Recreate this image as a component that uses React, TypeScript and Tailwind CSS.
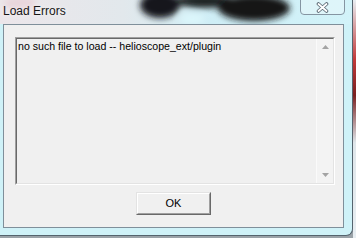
import React from 'react';

/**
 * Diálogo "Load Errors" al estilo Windows 7 (Aero), recortado a 356x238.
 */
function TitleGlass() {
  // fondo borroso detrás del cristal de la barra de título
  return (
    <svg className="absolute inset-0" width="353" height="24" viewBox="0 0 353 24">
      <defs>
        <linearGradient id="base" x1="0" x2="1" y1="0" y2="0">
          <stop offset="0" stopColor="#ece6ea" />
          <stop offset="0.35" stopColor="#e2e8ec" />
          <stop offset="0.6" stopColor="#cfeef6" />
          <stop offset="1" stopColor="#d2f3f9" />
        </linearGradient>
        <filter id="blur" x="-30%" y="-100%" width="160%" height="300%">
          <feGaussianBlur stdDeviation="3" />
        </filter>
      </defs>
      <rect width="353" height="24" fill="url(#base)" />
      <g filter="url(#blur)">
        <ellipse cx="20" cy="4" rx="16" ry="8" fill="#e9d6dc" />
        <ellipse cx="160" cy="5" rx="20" ry="13" fill="#16181b" />
        <ellipse cx="205" cy="1" rx="30" ry="7" fill="#1e2024" />
        <ellipse cx="254" cy="8" rx="36" ry="13" fill="#141518" />
        <ellipse cx="192" cy="19" rx="12" ry="5" fill="#dcf7fc" />
      </g>
    </svg>
  );
}

function CloseButton() {
  return (
    <div className="relative -mt-[1px] flex h-[16px] w-[45px] items-center justify-center rounded-b-[4px] border border-[#8595a2] bg-[#e6f6fa]/60">
      <svg width="13" height="11" viewBox="0 0 13 11">
        <path d="M2.5 2 L10.5 9 M10.5 2 L2.5 9" stroke="#5d6b76" strokeWidth="3.6" strokeLinecap="round" />
        <path d="M2.5 2 L10.5 9 M10.5 2 L2.5 9" stroke="#ffffff" strokeWidth="1.8" strokeLinecap="round" />
      </svg>
    </div>
  );
}

export default function App() {
  return (
    <div className="flex h-[238px] w-[356px] overflow-hidden bg-[#9aa2a8] font-['Liberation_Sans',Arial,sans-serif]">
      {/* ventana */}
      <div className="flex h-[236px] w-[353px] flex-col rounded-br-[7px] border-b border-r border-[#55646e] bg-[#cff2f8] pl-[3px]">
        <div className="relative -ml-[3px] flex h-[24px] shrink-0 items-start justify-between overflow-hidden">
          <TitleGlass />
          <span className="relative ml-[3px] mt-[4px] text-[12px] leading-[14px] text-[#161616] [text-shadow:0_0_6px_#ffffff]">
            Load Errors
          </span>
          <div className="relative mr-[7px]">
            <CloseButton />
          </div>
        </div>

        {/* área cliente */}
        <div className="flex h-[204px] w-[341px] flex-col border border-[#7f8f9a] bg-[#f0f0f0]">
          <div className="ml-[11px] mt-[12px] flex h-[148px] w-[320px] border-b border-l border-r border-t border-b-white border-l-[#a0a0a0] border-r-white border-t-[#a0a0a0]">
            <div className="flex flex-1 border-b border-l border-r border-t border-b-[#e3e3e3] border-l-[#696969] border-r-[#e3e3e3] border-t-[#696969] bg-[#f0f0f0]">
              <div className="flex-1 pl-[1px] pt-[1px] font-['Liberation_Sans',Arial,sans-serif] text-[10.6px] leading-[13px] text-black">
                no such file to load -- helioscope_ext/plugin
              </div>
              <div className="flex w-[17px] flex-col items-center justify-between border-l border-[#fafafa] bg-[#f3f3f3] py-[6px]">
                <svg width="7" height="4" viewBox="0 0 7 4">
                  <path d="M0 4 L3.5 0 L7 4 Z" fill="#a3a3a3" />
                </svg>
                <svg width="7" height="4" viewBox="0 0 7 4">
                  <path d="M0 0 L7 0 L3.5 4 Z" fill="#a3a3a3" />
                </svg>
              </div>
            </div>
          </div>

          <div className="mt-[7px] flex justify-center">
            <button className="flex h-[23px] w-[75px] border-b border-l border-r border-t border-b-[#696969] border-l-[#e3e3e3] border-r-[#696969] border-t-[#e3e3e3]">
              <span className="flex flex-1 items-center justify-center border-b border-l border-r border-t border-b-[#a0a0a0] border-l-white border-r-[#a0a0a0] border-t-white bg-[#f0f0f0] text-[11px] text-black">
                OK
              </span>
            </button>
          </div>
        </div>
      </div>
      {/* lo que queda detrás de la ventana */}
      <div className="w-[3px] bg-[linear-gradient(#e8eef2,#c23a3a_25%,#7a2020_40%,#dfe6ea_60%,#e8eef2)]" />
    </div>
  );
}
